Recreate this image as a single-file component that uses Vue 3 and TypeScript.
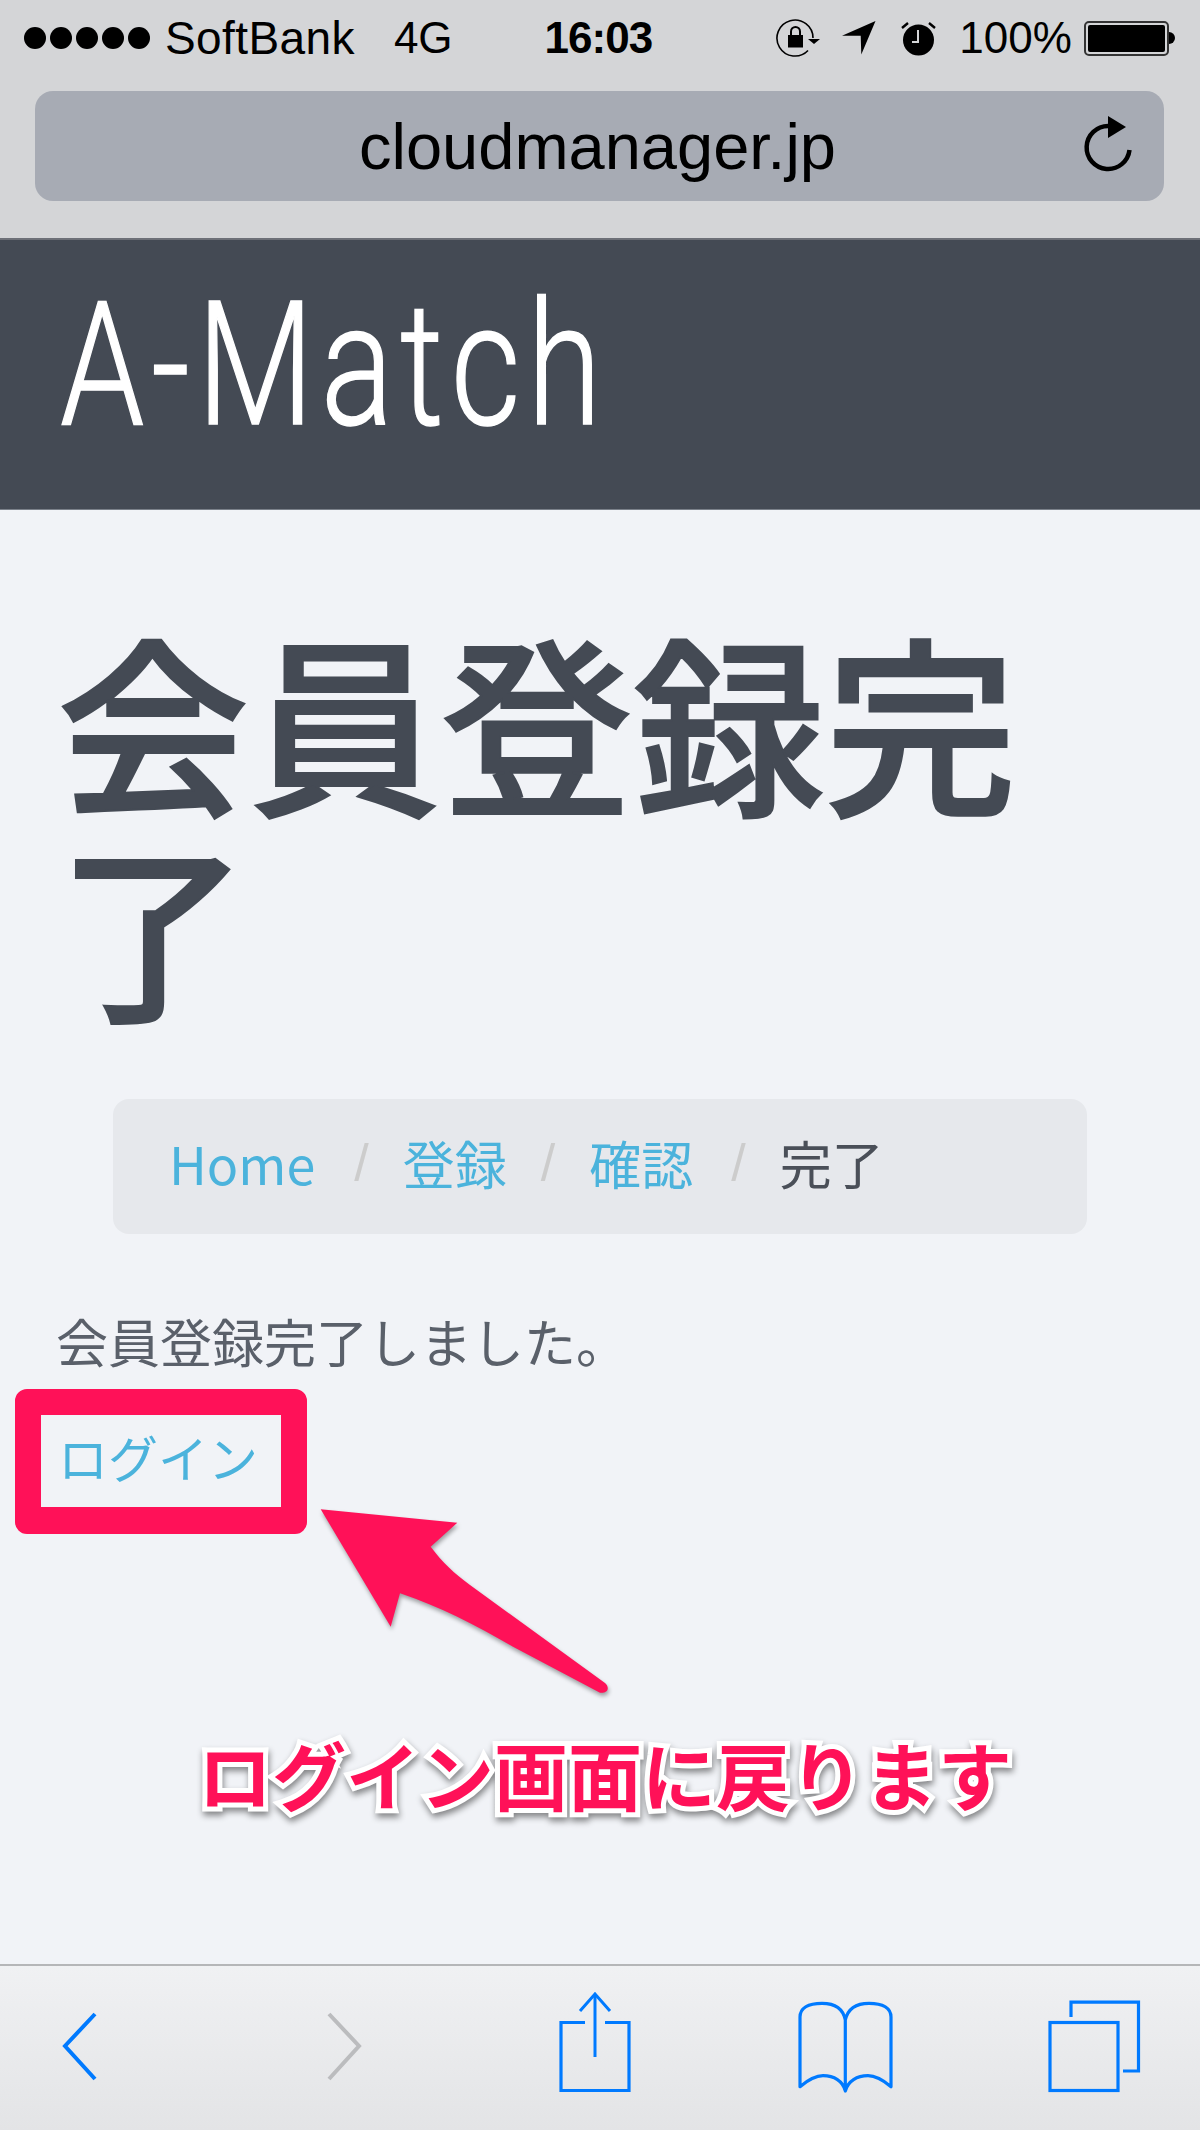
<script setup lang="ts">
interface Crumb {
  label: string;
  current?: boolean;
}

const crumbs: Crumb[] = [
  { label: "Home" },
  { label: "登録" },
  { label: "確認" },
  { label: "完了", current: true },
];
</script>

<template>
  <div class="page">
    <div class="chrome">
      <div class="status">
        <div class="dots"><i v-for="n in 5" :key="n"></i></div>
        <span class="carrier">SoftBank</span>
        <span class="net">4G</span>
        <span class="time">16:03</span>
        <svg class="ic-lock" width="44" height="38" viewBox="0 0 44 38">
          <path d="M32 31.500A18 18 0 1 1 37 19" fill="none" stroke="#000" stroke-width="1.600" />
          <path d="M32 20h12l-6 5z" fill="#000" />
          <rect x="12" y="16" width="15" height="12.500" fill="#000" />
          <path d="M15 16v-3.500a4.500 4.500 0 0 1 9 0V16" fill="none" stroke="#000" stroke-width="2" />
        </svg>
        <svg class="ic-loc" width="34" height="34" viewBox="0 0 34 34">
          <path d="M33.500 0 0 14.700h18.700l.6 18.800z" fill="#000" />
        </svg>
        <svg class="ic-alarm" width="37" height="35" viewBox="0 0 37 35">
          <circle cx="18.500" cy="19" r="15.500" fill="#000" />
          <path d="M18 9v12h-6" fill="none" stroke="#d4d5d7" stroke-width="2" />
          <path d="M2 7l6-5M29 2l6 5" fill="none" stroke="#000" stroke-width="2.400" />
        </svg>
        <span class="pct">100%</span>
        <div class="battery"><i></i></div>
        <div class="nub"></div>
      </div>
      <div class="urlbar">
        <span class="url">cloudmanager.jp</span>
        <svg class="reload" width="50" height="60" viewBox="0 0 50 60">
          <path d="M45.500 36A21.500 21.500 0 1 1 24.300 12" fill="none" stroke="#000" stroke-width="4.500" />
          <path d="M24 2 42 13 24 24z" fill="#000" />
        </svg>
      </div>
    </div>

    <header class="brand"><span class="brand-name">A-Match</span></header>

    <main class="content">
      <h1 class="title">会員登録完了</h1>
      <ol class="crumbs">
        <li v-for="(c, i) in crumbs" :key="c.label" :class="{ current: c.current }">
          <span v-if="i > 0" class="sep">/</span>
          <span>{{ c.label }}</span>
        </li>
      </ol>
      <p class="msg">会員登録完了しました。</p>
      <a class="login">ログイン</a>
    </main>

    <footer class="toolbar">
      <svg class="t-back" width="38" height="70" viewBox="0 0 38 70">
        <path d="M34 2 4 34l30 33" fill="none" stroke="#007aff" stroke-width="4" />
      </svg>
      <svg class="t-fwd" width="38" height="70" viewBox="0 0 38 70">
        <path d="M4 2l30 32L4 67" fill="none" stroke="#bbbcbe" stroke-width="4" />
      </svg>
      <svg class="t-share" width="72" height="101" viewBox="0 0 72 101">
        <path d="M26 31.500H2v68h68v-68H46" fill="none" stroke="#007aff" stroke-width="3.200" />
        <path d="M36 3v63" fill="none" stroke="#007aff" stroke-width="3" />
        <path d="M21 20 36 3l15 17" fill="none" stroke="#007aff" stroke-width="3" />
      </svg>
      <svg class="t-book" width="96" height="94" viewBox="0 0 96 94">
        <path
          d="M47.300 91V20C45 8 36 3.300 24 3.300 10 3.300 2 8 2 17v69.700C10 80 17 75.700 25 75.700c11 0 20 5.300 22.300 15.300 2.700-10 11.700-15.300 22.700-15.300 8 0 15 4.300 23 11V17C93 8 85 3.300 71 3.300 59 3.300 50 8 47.300 20"
          fill="none"
          stroke="#007aff"
          stroke-width="3.200"
          stroke-linejoin="round"
        />
      </svg>
      <svg class="t-tabs" width="96" height="94" viewBox="0 0 96 94">
        <path d="M25 18V3.200h67.500V72H77" fill="none" stroke="#007aff" stroke-width="3.200" />
        <rect x="4" y="23.500" width="68" height="68" fill="none" stroke="#007aff" stroke-width="3.200" />
      </svg>
    </footer>

    <div class="login-box"></div>
    <svg class="arrow" width="310" height="210" viewBox="0 0 310 210">
      <path
        d="M10.700 9.300 147.300 22.700 120.700 46.700C132 62 145 74 160 85L295 183C298.500 186 298.500 190 296 191.500 294 193 292 193 290 192.700L203 146.700C165 125 130 106.700 90 93.300L80.700 126.700Z"
        fill="#ff1158"
      />
    </svg>
    <div class="callout">ログイン画面に戻ります</div>
  </div>
</template>

<style>
body {
  background: #f1f3f7;
}
</style>

<style scoped>
.page {
  position: relative;
  width: 1200px;
  height: 2130px;
  display: flex;
  flex-direction: column;
  overflow: hidden;
  background: #f1f3f7;
  font-family: "Liberation Sans", "Noto Sans CJK JP", sans-serif;
}

.chrome {
  height: 240px;
  flex: none;
  background: #d4d5d7;
  color: #000;
  border-bottom: 2px solid #6d7077;
  box-sizing: border-box;
}

.status {
  height: 76px;
  display: flex;
  align-items: center;
  padding: 0 0 0 24px;
  font-size: 44px;
  line-height: 1;
}

.dots {
  display: flex;
  gap: 4px;
}

.dots i {
  width: 22px;
  height: 22px;
  border-radius: 50%;
  background: #000;
}

.carrier {
  margin-left: 15px;
  font-size: 46px;
  letter-spacing: 0.4px;
}

.net {
  margin-left: 39px;
}

.time {
  margin-left: 92px;
  font-weight: 700;
  letter-spacing: -1px;
}

.ic-lock {
  margin-left: 124px;
}

.ic-loc {
  margin-left: 22px;
}

.ic-alarm {
  margin-left: 24px;
}

.pct {
  margin-left: 22px;
  letter-spacing: 0.1px;
}

.battery {
  margin-left: 12px;
  width: 85px;
  height: 35px;
  box-sizing: border-box;
  border: 2px solid #333;
  border-radius: 5px;
  padding: 2px;
}

.battery i {
  display: block;
  height: 100%;
  background: #000;
  border-radius: 2px;
}

.nub {
  width: 6px;
  height: 12px;
  background: #000;
  border-radius: 0 6px 6px 0;
}

.urlbar {
  position: relative;
  margin: 15px 36px 0 35px;
  height: 110px;
  border-radius: 18px;
  background: #a7abb4;
  display: flex;
  align-items: center;
  justify-content: center;
}

.url {
  font-size: 65px;
  margin-right: 4px;
}

.reload {
  position: absolute;
  right: 30px;
  top: 23px;
}

.brand {
  height: 270px;
  flex: none;
  box-sizing: border-box;
  background: #444a54;
  border-bottom: 1px solid #7b818a;
  padding: 40px 0 0 60px;
}

.brand-name {
  display: inline-block;
  font-family: Roboto, sans-serif;
  font-weight: 300;
  font-size: 173px;
  line-height: 170px;
  letter-spacing: 9px;
  color: #fff;
  -webkit-text-stroke: 1.5px #fff;
  transform: scaleX(0.78);
  transform-origin: left center;
}

.content {
  flex: 1;
  padding: 0 57px;
  color: #444a54;
  font-family: "Noto Sans CJK JP", sans-serif;
}

.title {
  margin: 105px 0 0;
  font-size: 192px;
  line-height: 206px;
  font-weight: 500;
  -webkit-text-stroke: 2px #444a54;
}

.crumbs {
  list-style: none;
  margin: 72px 56px 0 56px;
  padding: 0 56px 8px;
  height: 135px;
  box-sizing: border-box;
  border-radius: 16px;
  background: #e6e8ec;
  display: flex;
  align-items: center;
  font-size: 52px;
  font-weight: 400;
  color: #4bb3dc;
}

.crumbs li {
  display: flex;
  align-items: center;
}

.crumbs li:first-child {
  margin-right: 5px;
}

.crumbs .current {
  color: #4a4f58;
  margin-left: 4px;
}

.sep {
  margin: 0 34px;
  color: #ccc;
  font-family: "Liberation Sans", sans-serif;
}

.msg {
  margin: 71px 0 0 -1px;
  font-size: 52px;
  line-height: 72px;
  font-weight: 400;
  color: #5a606a;
}

.login {
  display: block;
  margin: 43px 0 0 1px;
  font-size: 50px;
  line-height: 72px;
  font-weight: 400;
  color: #4bb3dc;
}

.toolbar {
  height: 166px;
  flex: none;
  box-sizing: border-box;
  border-top: 2px solid #b5b6b8;
  background: linear-gradient(#f0f1f3, #e3e4e6);
  display: flex;
  align-items: flex-start;
}

.toolbar svg {
  flex: none;
}

.t-back {
  margin: 46px 0 0 61px;
}

.t-fwd {
  margin: 46px 0 0 226px;
}

.t-share {
  margin: 25px 0 0 196px;
}

.t-book {
  margin: 34px 0 0 167px;
}

.t-tabs {
  margin: 33px 0 0 152px;
}

.login-box {
  position: absolute;
  left: 15px;
  top: 1389px;
  width: 292px;
  height: 145px;
  box-sizing: border-box;
  border-style: solid;
  border-color: #ff1158;
  border-width: 26px 26px 27px 26px;
  border-radius: 12px;
}

.arrow {
  position: absolute;
  left: 310px;
  top: 1500px;
  filter: drop-shadow(1px 3px 2px rgba(0, 0, 0, 0.35));
}

.callout {
  position: absolute;
  left: 198px;
  top: 1728px;
  width: 830px;
  font-family: "Noto Sans CJK JP", sans-serif;
  font-size: 74px;
  line-height: 90px;
  font-weight: 700;
  white-space: nowrap;
  color: #ff1158;
  -webkit-text-stroke: 10px #fff;
  paint-order: stroke fill;
  filter: drop-shadow(1px 4px 3px rgba(0, 0, 0, 0.45));
}
</style>
